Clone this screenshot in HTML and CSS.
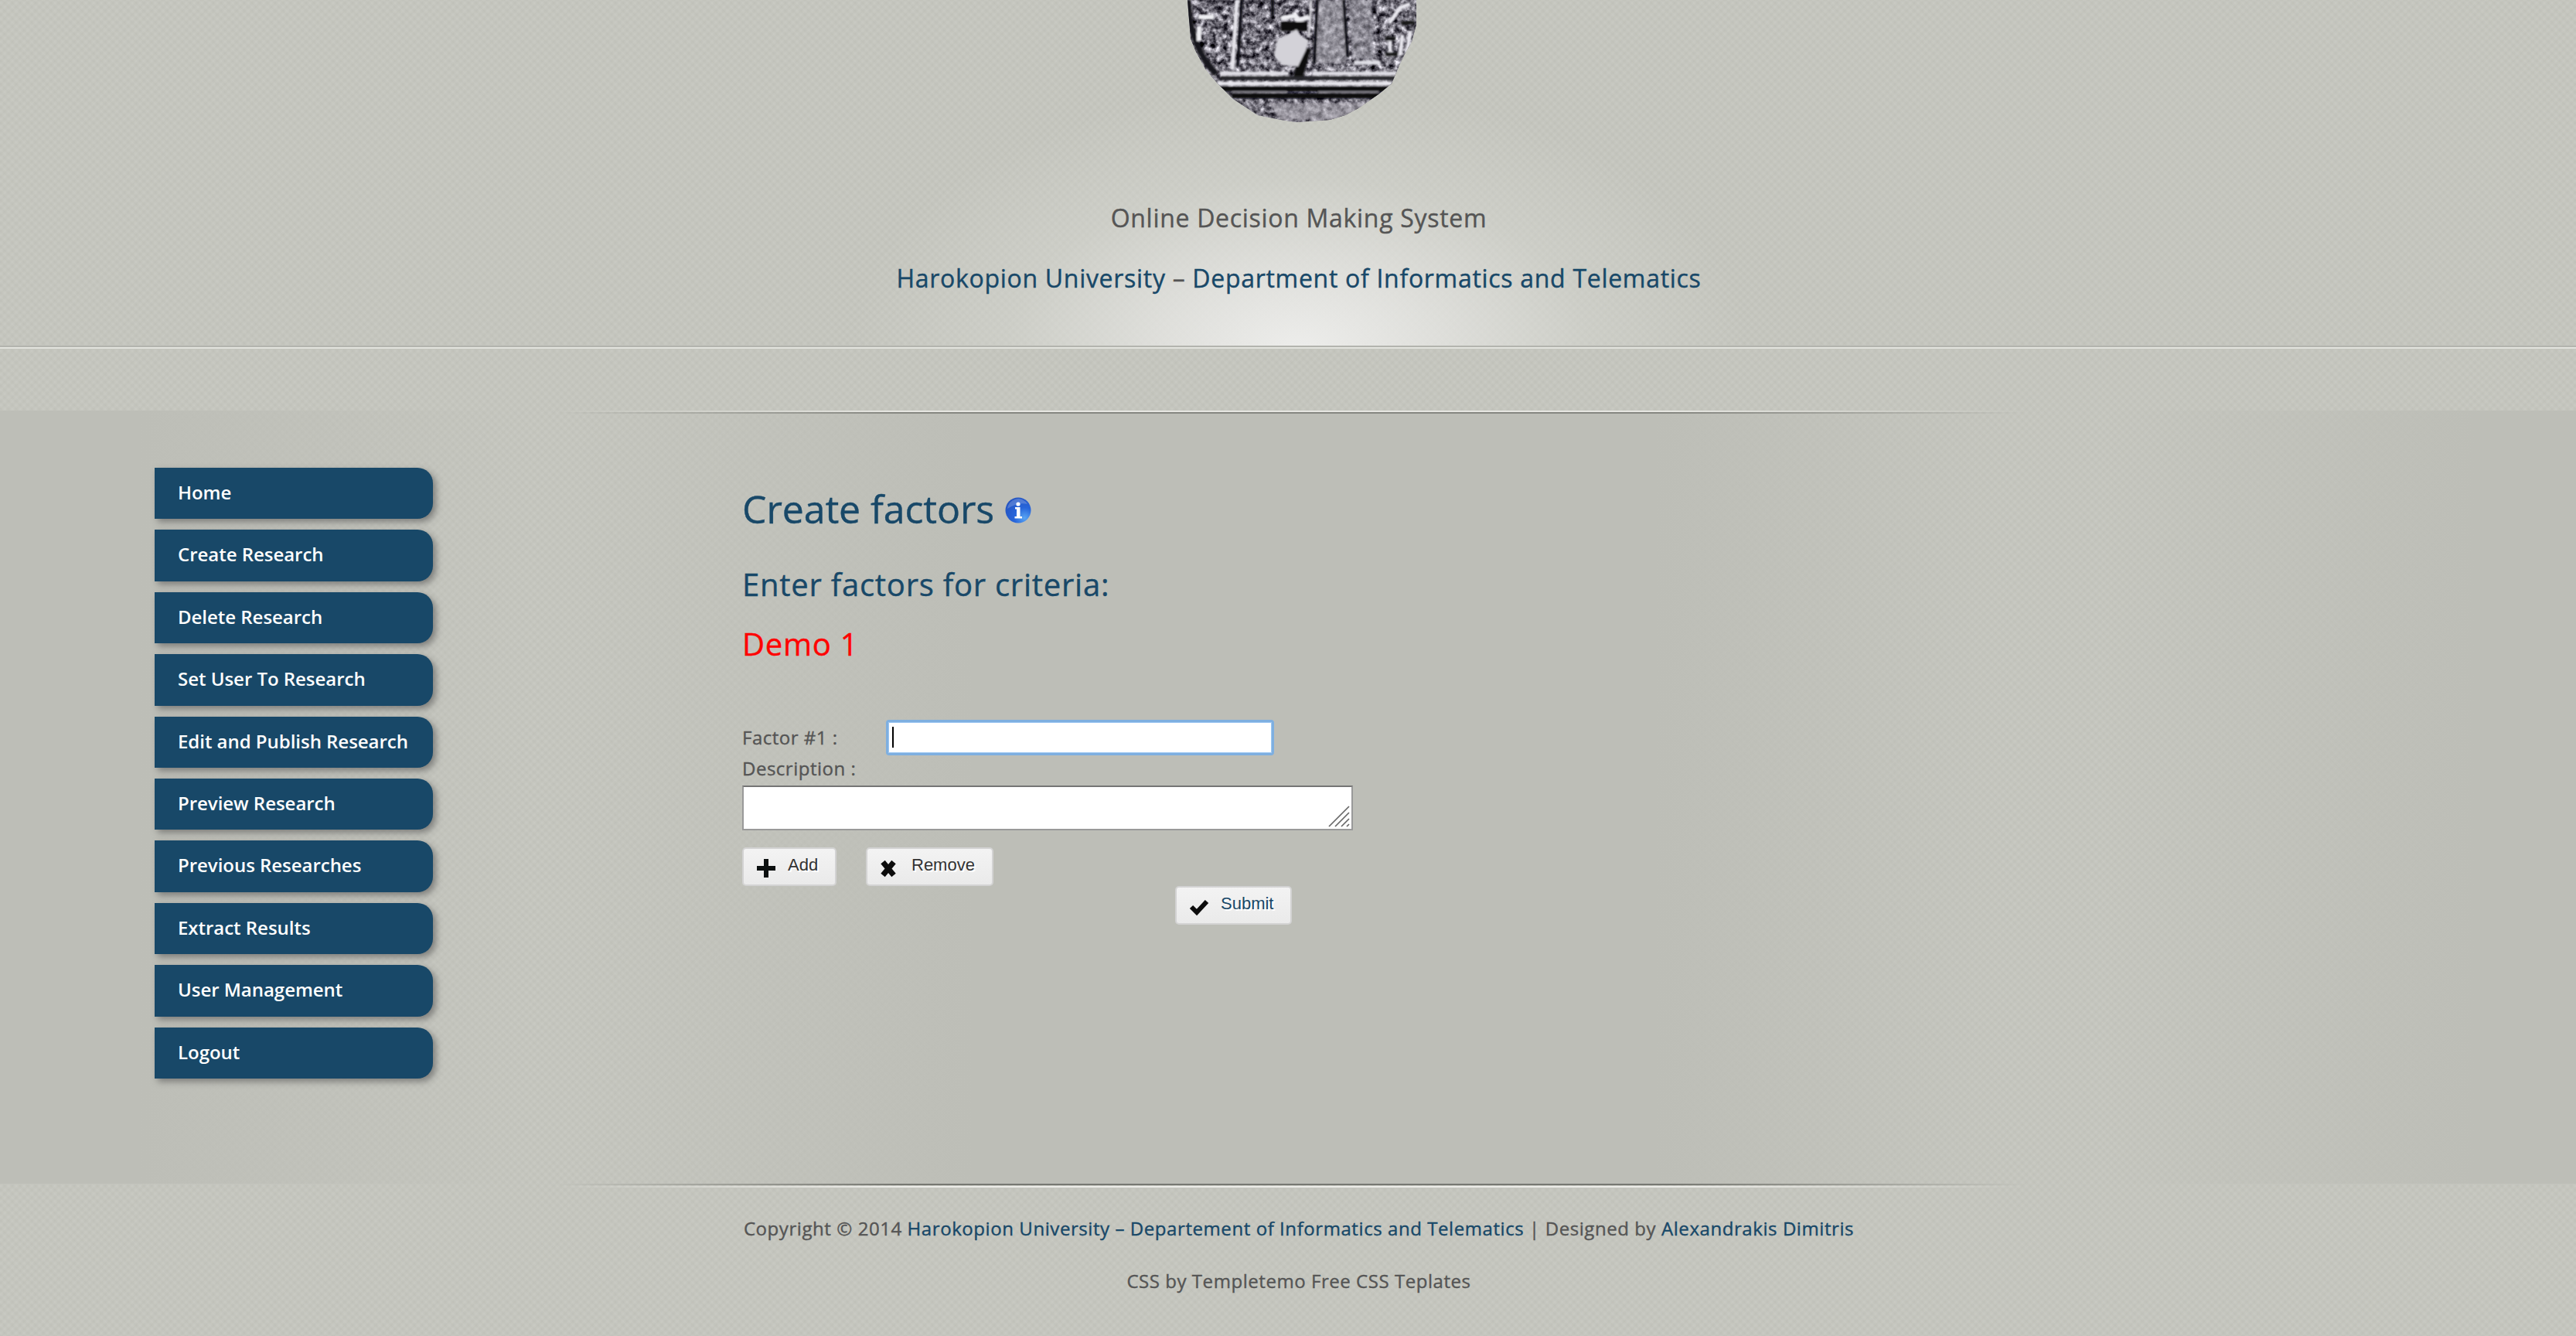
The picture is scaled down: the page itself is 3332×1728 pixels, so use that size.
FILE: index.html
```html
<!DOCTYPE html>
<html lang="en">
<head>
<meta charset="utf-8">
<title>Online Decision Making System</title>
<link rel="stylesheet" href="styles.css">
</head>
<body>
<header class="header">
  <svg class="seal" width="297" height="158" viewBox="0 0 297 158" aria-hidden="true">
    <defs>
      <clipPath id="coin"><path d="M1 0 H297 V32 L291 54 L284 66 L276 82 L265 108 L248 122 L222 140 L205 149 L185 155 L142 158 L122 155 L92 149 L60 128 L40 108 L33 100 L24 89 L12 67 L5 50Z"/></clipPath>
      <filter id="stone" x="0" y="0" width="100%" height="100%" color-interpolation-filters="sRGB">
        <feTurbulence type="fractalNoise" baseFrequency=".13" numOctaves="3" seed="8"/>
        <feColorMatrix values="1.2 .8 0 0 -.55  1.2 .8 0 0 -.56  1.2 .8 0 0 -.52  0 0 0 0 1"/>
      </filter>
      <filter id="soft"><feGaussianBlur stdDeviation="1.2"/></filter>
    </defs>
    <g clip-path="url(#coin)">
      <rect width="300" height="158" fill="#777580"/>
      <rect width="300" height="158" filter="url(#stone)"/>
      <g filter="url(#soft)" fill="none">
        <path d="M2 0 C3 48 20 76 38 96" stroke="#17161a" stroke-width="7"/>
        <path d="M171 0 L202 0 L206 82 L168 82Z" fill="#aaa8b1" opacity=".6"/>
        <path d="M209 0 L240 0 L241 76 L214 76Z" fill="#a09ea8" opacity=".55"/>
        <path d="M65 0L59 90" stroke="#e5e4ea" stroke-width="5"/>
        <path d="M71 0 L66 86 M111 0 V20 M203 0 L208 74 M169 0 L165 82" stroke="#111014" stroke-width="4"/>
        <path d="M161 0 L158 48" stroke="#dad9de" stroke-width="3"/>
        <path d="M122 24 L140 20 L144 26 L158 22 M15 22 H35 M16 34 V53" stroke="#eeeef2" stroke-width="6"/>
        <path d="M122 34 H156 M155 62 L143 103" stroke="#08080b" stroke-width="12"/>
        <path d="M132 44 L142 38 L148 47 L158 52 L154 65 L144 86 L124 84 L113 72 L117 52Z" fill="#d3d2d8"/>
        <path d="M262 30 L276 10 L289 5 M263 53 V68 M279 45 L276 72 M289 40 L284 76" stroke="#e8e7ee" stroke-width="5"/>
        <path d="M278 30 L294 29 M257 50 H270 M257 70 H273" stroke="#131317" stroke-width="5"/>
        <path d="M43 95 H132 M164 95 H282 M216 81 H250" stroke="#e0dfe6" stroke-width="5"/>
        <path d="M44 101 H280" stroke="#26252b" stroke-width="5"/>
        <path d="M40 108 H266" stroke="#e9e8ee" stroke-width="5"/>
        <path d="M41 115 H270 M58 124 H254" stroke="#0d0c10" stroke-width="7"/>
        <path d="M59 119 H129 M170 119 H248" stroke="#87858d" stroke-width="2"/>
        <path d="M106 133 H236 L207 155 H122Z" fill="#b0aeb6" opacity=".6"/>
      </g>
    </g>
  </svg>
  <div class="titles">
    <p class="title">Online Decision Making System</p>
    <p class="title"><a>Harokopion University</a> – <a>Department of Informatics and Telematics</a></p>
  </div>
</header>
<main class="main">
  <nav class="menu">
    <a>Home</a>
    <a>Create Research</a>
    <a>Delete Research</a>
    <a>Set User To Research</a>
    <a>Edit and Publish Research</a>
    <a>Preview Research</a>
    <a>Previous Researches</a>
    <a>Extract Results</a>
    <a>User Management</a>
    <a>Logout</a>
  </nav>
  <section class="content">
    <h1>Create factors
      <svg class="info" width="34" height="34" viewBox="0 0 34 34" aria-hidden="true">
        <defs><radialGradient id="ball" cx=".75" cy=".8" r=".9"><stop offset="0" stop-color="#59a5f3"/><stop offset=".45" stop-color="#2765da"/><stop offset="1" stop-color="#2453bf"/></radialGradient></defs>
        <circle cx="17" cy="17" r="16.5" fill="url(#ball)"/>
        <path d="M3 15A14 14 0 0 1 29 9Q17 6 3 15Z" fill="#fff" opacity=".2"/>
        <circle cx="17" cy="9" r="2.6" fill="#fff"/>
        <path d="M13 13H19.5V25H22V27.5H12.500V25H15V15.500H13Z" fill="#fff"/>
      </svg>
    </h1>
    <h2>Enter factors for criteria:</h2>
    <h2 class="criterion">Demo 1</h2>
    <form class="form">
      <div class="field"><span class="label-factor">Factor #1 :</span><span class="input"><i class="caret"></i></span></div>
      <div class="label-description"><span>Description :</span></div>
      <div class="textarea">
        <svg width="28" height="28" viewBox="0 0 28 28" aria-hidden="true"><path d="M1 27L27 1M9 27L27 9M17 27L27 17M24 27L27 24" stroke="#666" stroke-width="1.700"/></svg>
      </div>
      <div class="actions">
        <span class="button button-add"><svg width="26" height="26" viewBox="0 0 26 26" aria-hidden="true"><path d="M10 1H16V10H25V16H16V25H10V16H1V10H10Z" fill="#0c1010"/></svg><b>Add</b></span>
        <span class="button button-remove"><svg width="26" height="26" viewBox="0 0 26 26" aria-hidden="true"><path d="M4 5L18 22M18 5L4 22" stroke="#0c0c0c" stroke-width="7"/></svg><b>Remove</b></span>
      </div>
      <a class="button button-submit"><svg width="26" height="26" viewBox="0 0 26 26" aria-hidden="true"><path d="M3 13L10 20L23 6" fill="none" stroke="#0c0c0c" stroke-width="6"/></svg><b>Submit</b></a>
    </form>
  </section>
</main>
<footer class="footer">
  <p>Copyright © 2014 <a>Harokopion University – Departement of Informatics and Telematics</a> | Designed by <a>Alexandrakis Dimitris</a></p>
  <p class="credit">CSS by Templetemo Free CSS Teplates</p>
</footer>
</body>
</html>
```
FILE: styles.css
```css
* { box-sizing: border-box; }

body {
  margin: 0;
  height: 1728px;
  overflow: hidden;
  display: flex;
  flex-direction: column;
  font-family: "Open Sans", "Noto Sans", sans-serif;
  font-weight: 500;
  color: #555;
  -webkit-text-stroke: .4px currentColor;
  background:
    repeating-linear-gradient(45deg, rgba(90, 90, 75, .045) 0, transparent 3.5px, rgba(90, 90, 75, .045) 7.071px),
    repeating-linear-gradient(-45deg, rgba(90, 90, 75, .045) 0, transparent 3.5px, rgba(90, 90, 75, .045) 7.071px),
    #c9cac3;
}

p, h1, h2 { margin: 0; font-weight: 500; }
a { color: #184868; }

.header {
  height: 451px;
  flex: none;
  display: flex;
  flex-direction: column;
  align-items: center;
  border-bottom: 2px solid #e2e3dd;
  box-shadow: inset 0 -2px #b3b4ae;
  background: radial-gradient(ellipse 580px 340px at 1680px 452px, #ededeb 0, rgba(230, 230, 227, .8) 30%, rgba(215, 216, 210, .45) 65%, rgba(201, 202, 195, 0) 100%);
}
.seal { margin-left: 35px; flex: none; }
.titles { padding: 85px 0 0 28px; width: 100%; text-align: center; flex: none; }
.title { font-size: 32px; line-height: 78px; letter-spacing: .7px; white-space: nowrap; }

.main {
  height: 1005px;
  flex: none;
  margin-top: 80px;
  padding: 74px 0 0 200px;
  display: flex;
  align-items: flex-start;
  background:
    linear-gradient(90deg, transparent 720px, #e6e6e1 1160px 2160px, transparent 2620px) 0 0 / 100% 2px no-repeat,
    linear-gradient(90deg, transparent 720px, #868781 1160px 2160px, transparent 2620px) 0 2px / 100% 2px no-repeat,
    linear-gradient(90deg, transparent 720px, #777872 1160px 2160px, transparent 2620px) 0 1000px / 100% 2px no-repeat,
    linear-gradient(90deg, transparent 720px, #ecece8 1160px 2160px, transparent 2620px) 0 1003px / 100% 2px no-repeat,
    linear-gradient(90deg, #bdbeb7 180px, rgba(189, 190, 183, 0) 680px 740px, #bdbeb7 1260px 2140px, rgba(189, 190, 183, 0) 2600px 2720px, #bdbeb7 3200px) 0 0 / 100% 1000px no-repeat;
}

.menu { width: 760px; display: flex; flex-direction: column; gap: 14px; }
.menu a {
  width: 360px;
  height: 66.4px;
  padding-left: 30px;
  border-radius: 0 20px 20px 0;
  background: #184868;
  box-shadow: 4px 4px 8px rgba(80, 80, 80, .6);
  color: #fff;
  font-size: 24px;
  font-weight: 600;
  line-height: 64px;
  letter-spacing: -.03px;
  white-space: nowrap;
  -webkit-text-stroke: 0;
}

.content { width: 900px; color: #184868; }
h1 { display: flex; align-items: center; gap: 14px; font-size: 50px; line-height: 70px; padding-top: 18px; letter-spacing: -.1px; }
.info { margin-top: 4px; }
h2 { font-size: 40px; line-height: 78px; margin-top: 24px; letter-spacing: .75px; }
h2.criterion { color: #f00; margin-top: -1px; }

.form { color: #555; font-size: 24px; padding-top: 59px; }
.field { height: 46px; display: flex; align-items: center; }
.field .label-factor { width: 186px; letter-spacing: .5px; padding-bottom: 1px; }
.input {
  width: 502px;
  height: 46px;
  padding: 6px 0 0 5px;
  border: 3px solid #7eafe0;
  border-radius: 4px;
  box-shadow: inset 0 0 0 1px #9cc6f2;
  background: #fff;
}
.caret { display: block; width: 2px; height: 27px; background: #000; }
.label-description { height: 39px; line-height: 34px; letter-spacing: .5px; }
.textarea {
  width: 790px;
  height: 58px;
  padding: 0 2px 2px 0;
  border: 2px solid #999;
  border-top-color: #757575;
  background: #fff;
  display: flex;
  justify-content: flex-end;
  align-items: flex-end;
}
.actions { display: flex; gap: 38px; padding-top: 22px; }
.button {
  height: 50px;
  display: flex;
  border: 2px solid #d3d3d3;
  border-radius: 5px;
  background: linear-gradient(#f3f3f3, #eaeaea);
  color: #333;
  font: 22px/42px "Liberation Sans", Arial, sans-serif;
  text-shadow: 2px 2px #fff;
  padding-left: 16px;
  gap: 15px;
  -webkit-text-stroke: 0;
}
.button b { font-weight: 400; }
.button svg { margin-top: 12px; }
.button-add { width: 122px; }
.button-remove { width: 165px; }
.button-submit { width: 151px; margin-left: 560px; color: #184868; }

.footer { width: 3360px; text-align: center; padding-top: 19px; font-size: 24px; letter-spacing: .57px; flex: none; }
.footer p { line-height: 68px; white-space: nowrap; }
.footer .credit { letter-spacing: .55px; }
```
